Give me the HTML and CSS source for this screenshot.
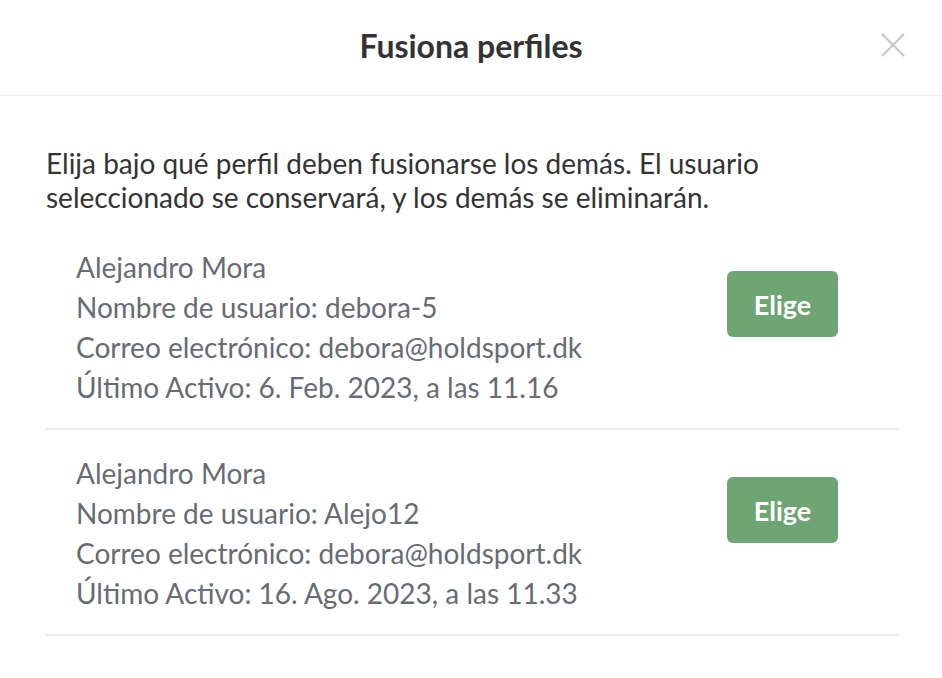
FILE: index.html
```html
<!DOCTYPE html>
<html>
	<head>
		<meta charset="utf-8">
		<title>Fusiona perfiles</title>
		<link rel="stylesheet" href="styles.css">
	</head>
	<body>
		<div class="modal">
			<header class="modal-header">
				<h1>Fusiona perfiles</h1>
				<button class="close" aria-label="Cerrar">
					<svg width="24" height="24" viewBox="0 0 24 24"><path d="M1 1L23 23M23 1L1 23" stroke="#c6c8cb" stroke-width="2.2" fill="none"/></svg>
				</button>
			</header>
			<main class="modal-body">
				<p class="intro">Elija bajo qué perfil deben fusionarse los demás. El usuario seleccionado se conservará, y los demás se eliminarán.</p>
				<div class="profile">
					<div class="profile-info">
						<div>Alejandro Mora</div>
						<div>Nombre de usuario: debora-5</div>
						<div>Correo electrónico: debora@holdsport.dk</div>
						<div>Último Activo: 6. Feb. 2023, a las 11.16</div>
					</div>
					<button class="pick">Elige</button>
				</div>
				<div class="profile">
					<div class="profile-info">
						<div>Alejandro Mora</div>
						<div>Nombre de usuario: Alejo12</div>
						<div>Correo electrónico: debora@holdsport.dk</div>
						<div>Último Activo: 16. Ago. 2023, a las 11.33</div>
					</div>
					<button class="pick">Elige</button>
				</div>
			</main>
		</div>
	</body>
</html>
```

FILE: styles.css
```css
* {
	margin: 0;
	padding: 0;
	box-sizing: border-box;
}
body {
	font-family: "Lato", sans-serif;
	background: #fff;
	color: #333;
}
.modal-header {
	position: relative;
	height: 96px;
	padding-bottom: 4px;
	border-bottom: 1px solid #ececf0;
	display: flex;
	align-items: center;
	justify-content: center;
}
.modal-header h1 {
	font-size: 32px;
	font-weight: 700;
	color: #333;
}
.close {
	position: absolute;
	right: 37px;
	top: 33px;
	border: none;
	background: none;
	width: 24px;
	height: 24px;
}
.modal-body {
	padding: 50px 44px 0 46px;
}
.intro {
	font-size: 28px;
	line-height: 34px;
	padding-bottom: 33px;
}
.profile {
	display: flex;
	justify-content: space-between;
	align-items: flex-start;
	padding: 0 60px 21px 30px;
	border-bottom: 2px solid #e8ebee;
}
.profile + .profile {
	padding-top: 23px;
}
.profile-info {
	font-size: 28px;
	line-height: 40px;
	color: #666c74;
}
.pick {
	margin-top: 24px;
	width: 111px;
	height: 66px;
	border: none;
	border-radius: 6px;
	background: #6fa474;
	color: #fff;
	font-family: "Lato", sans-serif;
	font-size: 27px;
	font-weight: 700;
}
```
